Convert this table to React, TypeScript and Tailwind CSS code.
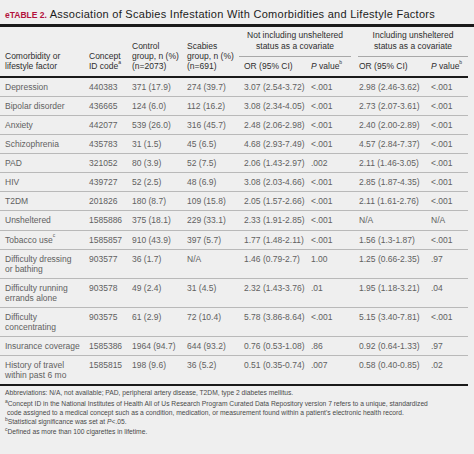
import type { ReactNode } from 'react';

const cols =
  'grid grid-cols-[84px_43px_55px_57px_67px_48px_72px_42px] w-[468px]';

type Row = [ReactNode, string, string, string, string, string, string, string];

const Sup = ({ children }: { children: ReactNode }) => (
  <sup className="align-top text-[5px] leading-[6px]">{children}</sup>
);

const rows: Row[] = [
  ['Depression', '440383', '371 (17.9)', '274 (39.7)', '3.07 (2.54-3.72)', '<.001', '2.98 (2.46-3.62)', '<.001'],
  ['Bipolar disorder', '436665', '124 (6.0)', '112 (16.2)', '3.08 (2.34-4.05)', '<.001', '2.73 (2.07-3.61)', '<.001'],
  ['Anxiety', '442077', '539 (26.0)', '316 (45.7)', '2.48 (2.06-2.98)', '<.001', '2.40 (2.00-2.89)', '<.001'],
  ['Schizophrenia', '435783', '31 (1.5)', '45 (6.5)', '4.68 (2.93-7.49)', '<.001', '4.57 (2.84-7.37)', '<.001'],
  ['PAD', '321052', '80 (3.9)', '52 (7.5)', '2.06 (1.43-2.97)', '.002', '2.11 (1.46-3.05)', '<.001'],
  ['HIV', '439727', '52 (2.5)', '48 (6.9)', '3.08 (2.03-4.66)', '<.001', '2.85 (1.87-4.35)', '<.001'],
  ['T2DM', '201826', '180 (8.7)', '109 (15.8)', '2.05 (1.57-2.66)', '<.001', '2.11 (1.61-2.76)', '<.001'],
  ['Unsheltered', '1585886', '375 (18.1)', '229 (33.1)', '2.33 (1.91-2.85)', '<.001', 'N/A', 'N/A'],
  [<>Tobacco use<Sup>c</Sup></>, '1585857', '910 (43.9)', '397 (5.7)', '1.77 (1.48-2.11)', '<.001', '1.56 (1.3-1.87)', '<.001'],
  [<>Difficulty dressing<br />or bathing</>, '903577', '36 (1.7)', 'N/A', '1.46 (0.79-2.7)', '1.00', '1.25 (0.66-2.35)', '.97'],
  [<>Difficulty running<br />errands alone</>, '903578', '49 (2.4)', '31 (4.5)', '2.32 (1.43-3.76)', '.01', '1.95 (1.18-3.21)', '.04'],
  [<>Difficulty<br />concentrating</>, '903575', '61 (2.9)', '72 (10.4)', '5.78 (3.86-8.64)', '<.001', '5.15 (3.40-7.81)', '<.001'],
  ['Insurance coverage', '1585386', '1964 (94.7)', '644 (93.2)', '0.76 (0.53-1.08)', '.86', '0.92 (0.64-1.33)', '.97'],
  [<>History of travel<br />within past 6 mo</>, '1585815', '198 (9.6)', '36 (5.2)', '0.51 (0.35-0.74)', '.007', '0.58 (0.40-0.85)', '.02'],
];

function PValue() {
  return (
    <>
      <i>P</i> value<Sup>b</Sup>
    </>
  );
}

export default function App() {
  return (
    <div className="h-[454px] w-[474px] overflow-hidden bg-[#efefef] font-['Liberation_Sans',Arial,sans-serif]">
      <h1 className="whitespace-nowrap pl-[5px] pt-[7px] text-[11px] leading-[14px] tracking-[0.28px] text-[#1c1c1c]">
        <span className="text-[8.5px] font-bold tracking-normal text-[#b3123d]">
          eTABLE 2.
        </span>{' '}
        Association of Scabies Infestation With Comorbidities and Lifestyle Factors
      </h1>
      <div className="mt-[2px] border-t-[3px] border-[#1a1a1a]" />

      <div className="whitespace-nowrap text-[8.5px] leading-[10px]">
        {/* header */}
        <div className={`${cols} border-b-2 border-[#1a1a1a] text-[#2e2e2e]`}>
          <div className="row-span-2 self-end pb-[4.5px] pl-[5px]">
            Comorbidity or
            <br />
            lifestyle factor
          </div>
          <div className="row-span-2 self-end pb-[4.5px] pl-[5px]">
            Concept
            <br />
            ID code<Sup>a</Sup>
          </div>
          <div className="row-span-2 self-end pb-[4.5px] pl-[5px]">
            Control
            <br />
            group, n (%)
            <br />
            (n=2073)
          </div>
          <div className="row-span-2 self-end pb-[4.5px] pl-[5px]">
            Scabies
            <br />
            group, n (%)
            <br />
            (n=691)
          </div>
          <div className="col-span-2 pr-[3px]">
            <div className="border-b border-[#a8a8a8] pb-[3.5px] pt-[2.5px] text-center leading-[11.5px]">
              Not including unsheltered
              <br />
              status as a covariate
            </div>
          </div>
          <div className="col-span-2 pl-[4px]">
            <div className="border-b border-[#a8a8a8] pb-[3.5px] pt-[2.5px] text-center leading-[11.5px]">
              Including unsheltered
              <br />
              status as a covariate
            </div>
          </div>
          <div className="pb-[4.5px] pl-[5px] pt-[4px]">OR (95% CI)</div>
          <div className="pb-[4.5px] pl-[5px] pt-[4px]">
            <PValue />
          </div>
          <div className="pb-[4.5px] pl-[5px] pt-[4px]">OR (95% CI)</div>
          <div className="pb-[4.5px] pl-[5px] pt-[4px]">
            <PValue />
          </div>
        </div>

        {/* body */}
        <div className="w-[468px] border-b-2 border-[#1a1a1a] text-[#616161]">
          {rows.map((row, i) => (
            <div
              key={i}
              className={`${cols} ${i < rows.length - 1 ? 'border-b border-[#b9b9b9]' : ''}`}
            >
              {row.map((cell, j) => (
                <div key={j} className="py-[4.07px] pl-[5px]">
                  {cell}
                </div>
              ))}
            </div>
          ))}
        </div>
      </div>

      {/* footnotes */}
      <div className="whitespace-nowrap pl-[5px] pt-[2.5px] text-[6.7px] leading-[8.5px] text-[#4a4a4a]">
        <p>
          Abbreviations: N/A, not available; PAD, peripheral artery disease, T2DM, type 2 diabetes mellitus.
        </p>
        <p className="mt-[3px] pl-[2px] indent-[-2px]">
          <Sup>a</Sup>Concept ID in the National Institutes of Health All of Us Research Program Curated Data
          Repository version 7 refers to a unique, standardized
          <br />
          code assigned to a medical concept such as a condition, medication, or measurement found within a
          patient&apos;s electronic health record.
        </p>
        <p className="mt-[1px]">
          <Sup>b</Sup>Statistical significance was set at <i>P</i>&lt;.05.
        </p>
        <p className="mt-[1.5px]">
          <Sup>c</Sup>Defined as more than 100 cigarettes in lifetime.
        </p>
      </div>
    </div>
  );
}
